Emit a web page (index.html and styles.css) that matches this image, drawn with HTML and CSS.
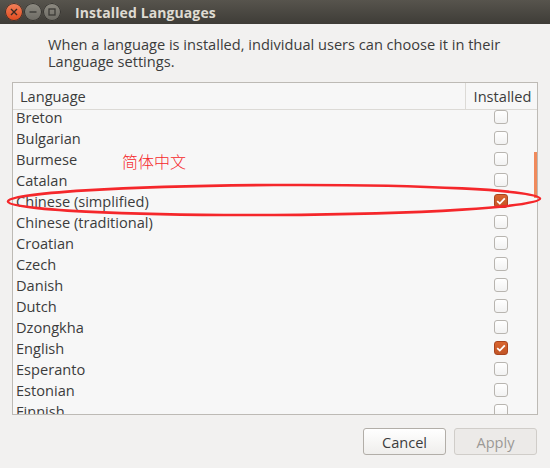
FILE: index.html
```html
<!DOCTYPE html>
<html>
<head>
<meta charset="utf-8">
<link rel="stylesheet" href="styles.css">
</head>
<body>
<div class="window">
  <div class="titlebar">
    <div class="wbtns">
      <span class="wbtn close"><svg width="8" height="8" viewBox="0 0 8 8"><path d="M1 1L7 7M7 1L1 7" stroke="#3a2a22" stroke-width="1.4"/></svg></span>
      <span class="wbtn"><svg width="8" height="8" viewBox="0 0 8 8"><path d="M0.5 4H7.5" stroke="#3c3b37" stroke-width="1.4"/></svg></span>
      <span class="wbtn"><svg width="8" height="8" viewBox="0 0 8 8"><rect x="1" y="1" width="6" height="6" fill="none" stroke="#3c3b37" stroke-width="1.3"/></svg></span>
    </div>
    <div class="title">Installed Languages</div>
  </div>
  <div class="content">
    <p class="desc">When a language is installed, individual users can choose it in their<br>Language settings.</p>
    <div class="list">
      <div class="header">
        <div class="hcol lang">Language</div>
        <div class="hcol inst">Installed</div>
      </div>
      <div class="viewport">
        <div class="rows">
          <div class="row"><span class="name">Breton</span><span class="cell"><span class="cb"></span></span></div>
          <div class="row"><span class="name">Bulgarian</span><span class="cell"><span class="cb"></span></span></div>
          <div class="row"><span class="name">Burmese</span><span class="cell"><span class="cb"></span></span></div>
          <div class="row"><span class="name">Catalan</span><span class="cell"><span class="cb"></span></span></div>
          <div class="row"><span class="name">Chinese (simplified)</span><span class="cell"><span class="cb on"><svg width="10" height="8" viewBox="0 0 10 8"><path d="M1.2 4.2L3.8 6.6L8.8 1.4" fill="none" stroke="#fff" stroke-width="1.8"/></svg></span></span></div>
          <div class="row"><span class="name">Chinese (traditional)</span><span class="cell"><span class="cb"></span></span></div>
          <div class="row"><span class="name">Croatian</span><span class="cell"><span class="cb"></span></span></div>
          <div class="row"><span class="name">Czech</span><span class="cell"><span class="cb"></span></span></div>
          <div class="row"><span class="name">Danish</span><span class="cell"><span class="cb"></span></span></div>
          <div class="row"><span class="name">Dutch</span><span class="cell"><span class="cb"></span></span></div>
          <div class="row"><span class="name">Dzongkha</span><span class="cell"><span class="cb"></span></span></div>
          <div class="row"><span class="name">English</span><span class="cell"><span class="cb on"><svg width="10" height="8" viewBox="0 0 10 8"><path d="M1.2 4.2L3.8 6.6L8.8 1.4" fill="none" stroke="#fff" stroke-width="1.8"/></svg></span></span></div>
          <div class="row"><span class="name">Esperanto</span><span class="cell"><span class="cb"></span></span></div>
          <div class="row"><span class="name">Estonian</span><span class="cell"><span class="cb"></span></span></div>
          <div class="row"><span class="name">Finnish</span><span class="cell"><span class="cb"></span></span></div>
        </div>
        <div class="scroll"></div>
      </div>
    </div>
    <div class="actions">
      <button class="btn">Cancel</button>
      <button class="btn disabled">Apply</button>
    </div>
  </div>
  <div class="annot-text">简体中文</div>
  <svg class="annot-ring" width="550" height="468" viewBox="0 0 550 468"><ellipse cx="274" cy="200" rx="266" ry="15" fill="none" stroke="#f5272b" stroke-width="2.6" transform="rotate(-0.3 274 200)"/></svg>
</div>
</body>
</html>
```
FILE: styles.css
```css
html, body {
  margin: 0;
  padding: 0;
}
body {
  width: 550px;
  height: 468px;
  overflow: hidden;
  background: #f2f1f0;
  font-family: "Open Sans", "Noto Sans", sans-serif;
  color: #3c3c3c;
}
.window {
  position: relative;
  width: 550px;
  height: 468px;
}
.titlebar {
  height: 24px;
  background: linear-gradient(#57544d, #3e3c37);
  display: flex;
  align-items: center;
  padding-left: 5px;
  gap: 14px;
}
.wbtns {
  display: flex;
  gap: 1px;
}
.wbtn {
  width: 18px;
  height: 18px;
  border-radius: 50%;
  background: linear-gradient(#8e8b82, #6c6a63);
  box-shadow: inset 0 0 0 1px #35332f;
  display: flex;
  align-items: center;
  justify-content: center;
}
.wbtn.close {
  background: linear-gradient(#f3825c, #e0491d);
}
.title {
  color: #dfdbd2;
  font-weight: bold;
  font-size: 14px;
  letter-spacing: 0.1px;
}
.content {
  display: flex;
  flex-direction: column;
}
.desc {
  margin: 12px 0 0 48px;
  font-size: 14.6px;
  line-height: 17px;
  color: #3c3c3c;
}
.list {
  margin: 12px 12px 0 12px;
  height: 331px;
  border: 1px solid #bdbab5;
  background: #f7f7f7;
  display: flex;
  flex-direction: column;
}
.header {
  height: 26px;
  border-bottom: 1px solid #dcdad6;
  display: flex;
  font-size: 14.6px;
  flex-shrink: 0;
}
.hcol {
  display: flex;
  align-items: center;
}
.hcol.lang {
  flex: 1;
  padding-left: 7px;
}
.hcol.inst {
  width: 72px;
  box-sizing: border-box;
  border-left: 1px solid #dcdad6;
  justify-content: center;
  padding-left: 2px;
}
.viewport {
  flex: 1;
  overflow: hidden;
  position: relative;
}
.rows {
  margin-top: -4px;
}
.row {
  height: 21px;
  display: flex;
  align-items: center;
  font-size: 14.6px;
}
.name {
  flex: 1;
  padding-left: 3px;
}
.cell {
  width: 72px;
  display: flex;
  justify-content: center;
}
.cb {
  width: 12px;
  height: 12px;
  border: 1px solid #b8b5b0;
  border-radius: 3px;
  background: linear-gradient(#ffffff, #f2f2f2);
  display: flex;
  align-items: center;
  justify-content: center;
}
.cb.on {
  border-color: #a9441e;
  background: linear-gradient(#d9652f, #c25526);
}
.scroll {
  position: absolute;
  right: 0;
  top: 42px;
  width: 3px;
  height: 46px;
  background: #f08a5c;
}
.actions {
  display: flex;
  justify-content: flex-end;
  gap: 8px;
  margin: 13px 13px 0 0;
}
.btn {
  width: 83px;
  height: 27px;
  border: 1px solid #b2aea8;
  border-radius: 3px;
  background: linear-gradient(#ffffff, #efeeec);
  font-family: "Open Sans", "Noto Sans", sans-serif;
  font-size: 14.6px;
  color: #3c3c3c;
  padding: 0;
}
.btn.disabled {
  background: #eceae8;
  border-color: #d0cdc9;
  color: #9b9996;
}
.annot-text {
  position: absolute;
  left: 122px;
  top: 151px;
  font-family: "Noto Sans CJK SC", sans-serif;
  font-weight: 300;
  font-size: 16px;
  line-height: 20px;
  color: #f5272b;
}
.annot-ring {
  position: absolute;
  left: 0;
  top: 0;
  pointer-events: none;
}
```
